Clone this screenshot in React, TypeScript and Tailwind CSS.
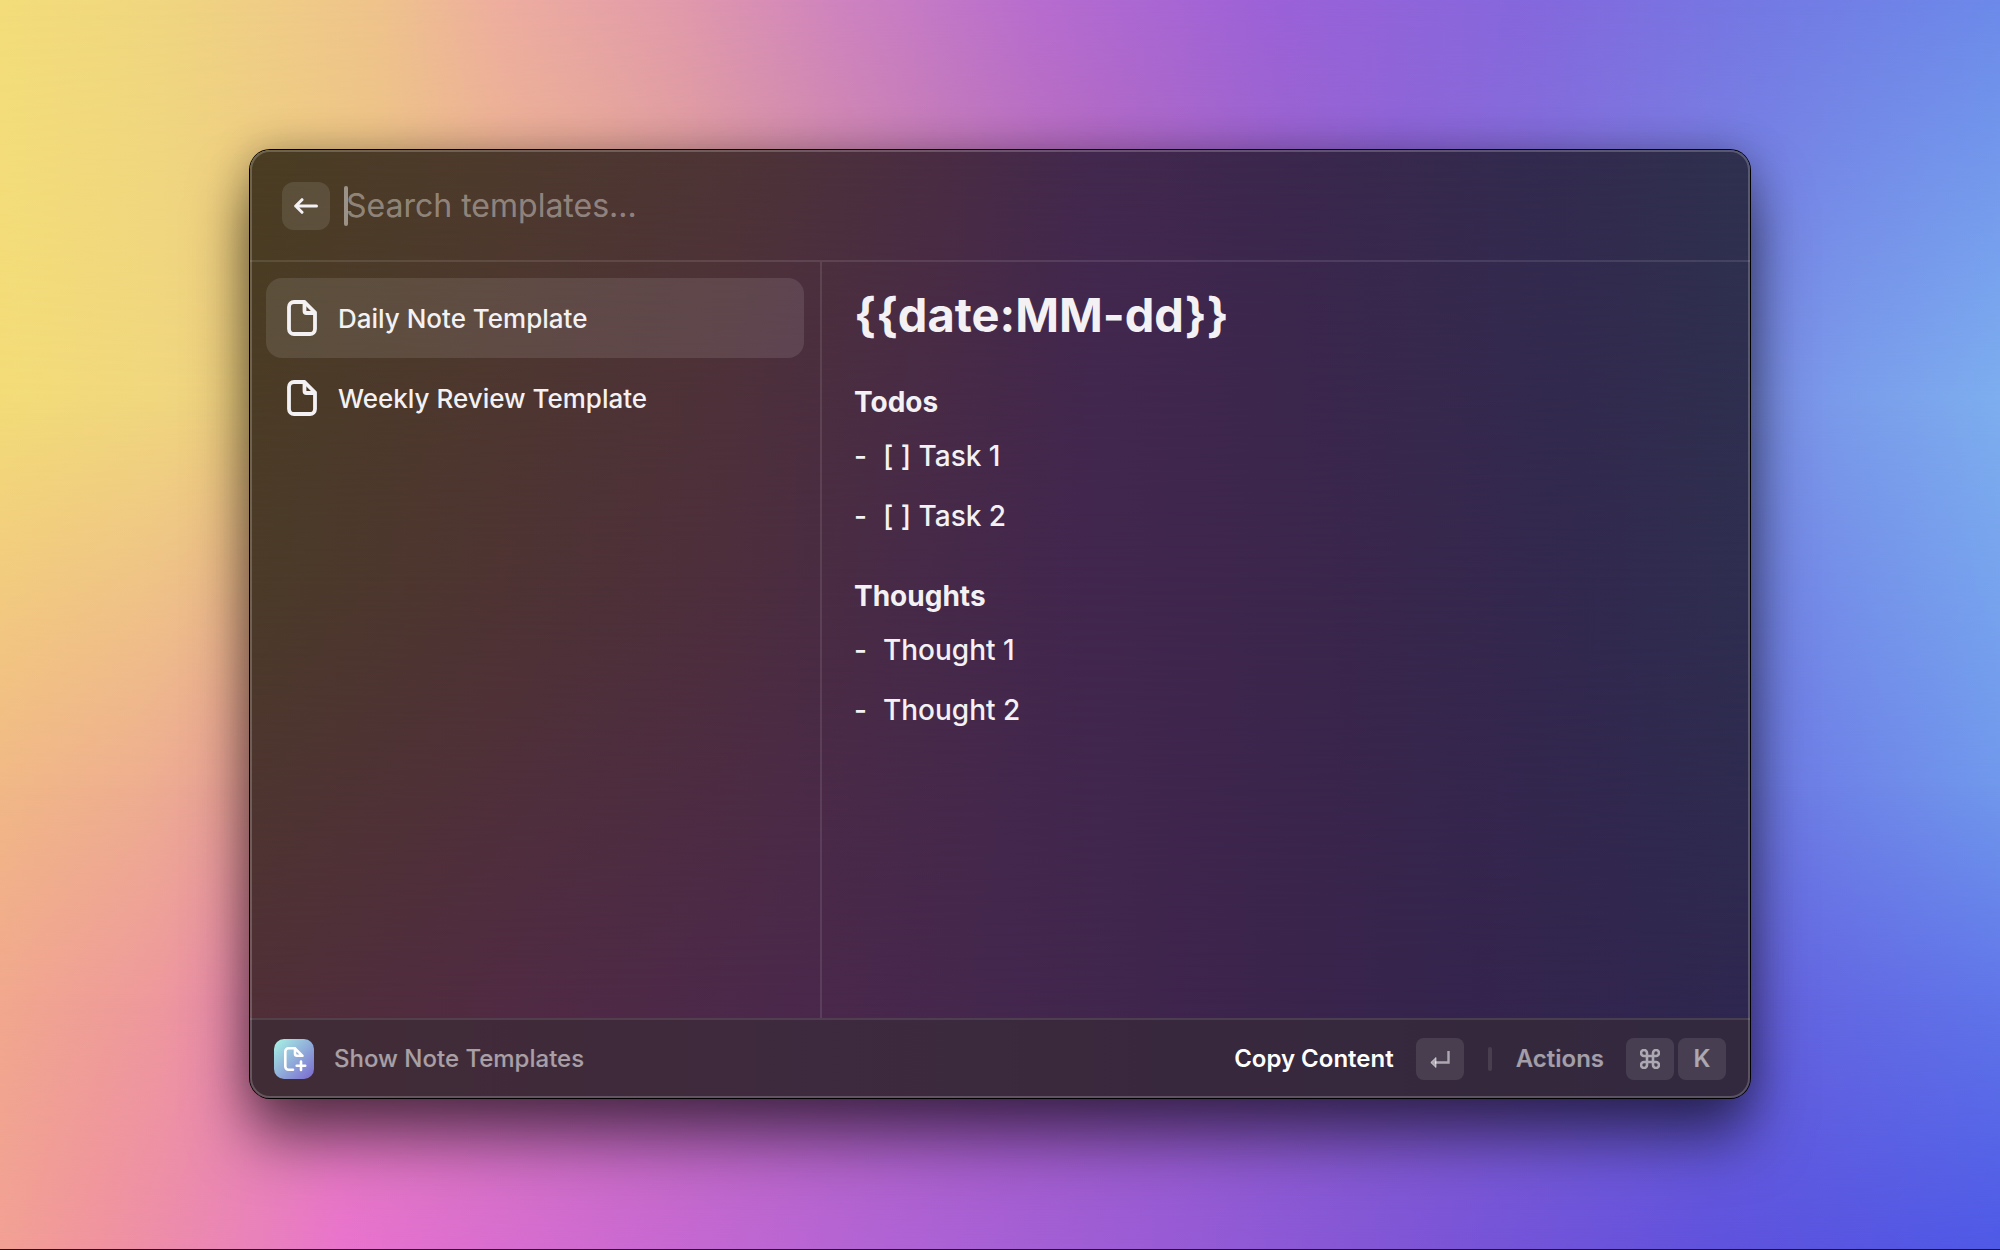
import React from "react";

function FileIcon() {
  return (
    <svg viewBox="0 0 32 36" className="h-9 w-8 shrink-0" fill="none" stroke="currentColor" strokeWidth="3.8" strokeLinejoin="round" strokeLinecap="round" aria-hidden="true">
      <path d="M18.500 2H8a5 5 0 0 0-5 5v22a5 5 0 0 0 5 5h16a5 5 0 0 0 5-5V12.500z" />
      <path d="M18.500 2.500V11a2 2 0 0 0 2 2H28" />
    </svg>
  );
}

function Backdrop() {
  return (
    <div aria-hidden="true" className="absolute inset-0 border-b border-[#2a1028]">
      <div className="absolute inset-0 bg-[linear-gradient(to_right,#f3dd7a_0%,#f0d680_8%,#efc38c_19%,#eeae9f_25%,#e19aab_34%,#cf83bf_42%,#b76ccf_52%,#9b61d8_64%,#8468dd_77%,#7479e3_88%,#6c8aea_100%)]" />
      <div className="absolute inset-0 bg-[linear-gradient(to_right,#f3dc78_0%,#f0d67e_8%,#e8b088_30%,#b56bb0_55%,#8a66d2_70%,#7a8ee6_88%,#7a9bea_92%,#7daeef_100%)] mask-[linear-gradient(to_bottom,transparent_0%,#000_32%)]" />
      <div className="absolute inset-0 bg-[linear-gradient(to_right,#f1b886_0%,#eeae90_7%,#e9a098_12%,#df7fa8_22%,#a060b8_55%,#7462d0_78%,#6e7ee6_90%,#7098ec_100%)] mask-[linear-gradient(to_bottom,transparent_32%,#000_63%)]" />
      <div className="absolute inset-0 bg-[linear-gradient(to_right,#f1a88d_0%,#ee989d_8%,#e585b0_13%,#a45cc4_50%,#6b62de_87%,#6466e1_90%,#6075e9_100%)] mask-[linear-gradient(to_bottom,transparent_63%,#000_80%)]" />
      <div className="absolute inset-0 bg-[linear-gradient(to_right,#f2a094_0%,#f0939f_5%,#e981bc_13%,#e973cd_17%,#cc69d1_31%,#b163d4_44%,#995bd5_58%,#7b54d6_72%,#5f52dd_86%,#4e59e6_100%)] mask-[linear-gradient(to_bottom,transparent_80%,#000_100%)]" />
    </div>
  );
}

function WindowTint() {
  return (
    <div aria-hidden="true" className="absolute inset-0">
      <div className="absolute inset-0 bg-[linear-gradient(to_right,#4a3d22_0%,#4d3a2c_16%,#4e3436_32%,#4a2c43_46%,#43284e_56%,#3c274d_68%,#332a4e_84%,#2f304f_100%)]" />
      <div className="absolute inset-0 bg-[linear-gradient(to_right,#4b3b28_0%,#4e3432_16%,#4d2e3d_32%,#472a48_44%,#42264e_56%,#3c264c_70%,#33284e_86%,#2e2e50_100%)] mask-[linear-gradient(to_bottom,transparent_0%,#000_45%)]" />
      <div className="absolute inset-0 bg-[linear-gradient(to_right,#502f38_0%,#502a44_18%,#4b284b_34%,#44274d_50%,#3c244c_66%,#35244d_80%,#2e274f_100%)] mask-[linear-gradient(to_bottom,transparent_45%,#000_92%)]" />
    </div>
  );
}

const templates = ["Daily Note Template", "Weekly Review Template"];
const sections = [
  { title: "Todos", items: ["[ ] Task 1", "[ ] Task 2"] },
  { title: "Thoughts", items: ["Thought 1", "Thought 2"] },
];

export default function App() {
  return (
    <main className="relative flex min-h-screen items-start justify-center px-[12.5%] py-[150px] font-['Inter',sans-serif] text-[#f3f1f3]">
      <Backdrop />
      <div className="relative w-full rounded-[20px] shadow-[0_0_0_1px_#000,0_40px_60px_rgba(0,0,0,0.55),0_0_40px_rgba(0,0,0,0.28)]">
        <section className="relative flex min-h-[948px] flex-col overflow-hidden rounded-[20px]">
          <WindowTint />
          <header className="relative flex h-28 items-center gap-4 border-b-2 border-white/10 px-8 pt-4 pb-3.5">
            <button type="button" aria-label="Back" className="flex size-12 shrink-0 items-center justify-center rounded-xl bg-white/10">
              <svg viewBox="0 0 24 16" className="h-4 w-6" fill="none" stroke="currentColor" strokeWidth="3" strokeLinecap="round" strokeLinejoin="round" aria-hidden="true">
                <path d="M22.500 8H1.700M8 1.700 1.700 8l6.300 6.300" />
              </svg>
            </button>
            <div className="relative flex grow items-center">
              <input type="text" aria-label="Search templates" placeholder="Search templates..." className="h-12 w-full bg-transparent text-[32px] outline-none placeholder:text-white/40" />
              <span aria-hidden="true" className="absolute -left-0.5 h-10 w-1 rounded-sm bg-white/45" />
            </div>
          </header>
          <div className="relative flex grow">
            <nav aria-label="Templates" className="w-[38.1333%] shrink-0 border-r-2 border-white/10 p-4">
              {templates.map((name, i) => (
                <button key={name} type="button" className={i === 0 ? "flex h-20 w-full items-center gap-5 rounded-2xl bg-white/10 px-5 text-left text-[26px] font-medium" : "flex h-20 w-full items-center gap-5 rounded-2xl px-5 text-left text-[26px] font-medium"}>
                  <FileIcon />
                  {name}
                </button>
              ))}
            </nav>
            <article className="grow px-8 pt-6">
              <h1 className="mb-10 text-[47px] leading-[58px] font-bold">{"{{date:MM-dd}}"}</h1>
              {sections.map((s) => (
                <section key={s.title} className="mb-8 text-[28px]">
                  <h2 className="leading-9 font-bold">{s.title}</h2>
                  <ul className="mt-1.5 flex flex-col font-medium">
                    {s.items.map((t) => (
                      <li key={t} className="flex h-[60px] items-center gap-4">
                        <span>-</span>
                        {t}
                      </li>
                    ))}
                  </ul>
                </section>
              ))}
            </article>
          </div>
          <footer className="relative flex h-20 items-center border-t-2 border-white/10 bg-[#352b34]/60 px-6 text-[24px] font-medium text-white/55">
            <svg viewBox="0 0 40 40" className="size-10" aria-hidden="true">
              <defs>
                <linearGradient id="badge" x1="0" y1="0" x2="1" y2="1">
                  <stop offset="0" stopColor="#a8f5e4" />
                  <stop offset="1" stopColor="#7a68d0" />
                </linearGradient>
              </defs>
              <rect width="40" height="40" rx="10" fill="url(#badge)" />
              <g fill="none" stroke="#fff" strokeWidth="2.600" strokeLinecap="round" strokeLinejoin="round">
                <path d="M19 30.700H14.500a3.200 3.200 0 0 1-3.200-3.200V12.500a3.200 3.200 0 0 1 3.200-3.200H21l7.500 7.500H23a2 2 0 0 1-2-2V9.300" />
                <path d="M27 22.500v8.500M22.700 26.800h8.500" />
              </g>
            </svg>
            <span className="ml-5 grow">Show Note Templates</span>
            <button type="button" className="flex items-center gap-[22px] font-semibold text-white">
              Copy Content
              <kbd className="flex h-[42px] w-12 items-center justify-center rounded-lg bg-white/10 text-white/55">
                <svg viewBox="0 0 20 17" className="h-[17px] w-5" fill="none" stroke="currentColor" strokeWidth="2.400" aria-hidden="true">
                  <path d="M18.500 0v11.500H5" />
                  <path d="M6 6.500v10L.8 11.500z" fill="currentColor" strokeWidth="1" strokeLinejoin="round" />
                </svg>
              </kbd>
            </button>
            <span aria-hidden="true" className="mx-6 h-6 w-1 rounded-full bg-white/10" />
            <button type="button" className="flex items-center gap-[22px] font-semibold">
              Actions
              <span className="flex gap-1">
                <kbd className="flex h-[42px] w-12 items-center justify-center rounded-lg bg-white/10">
                  <svg viewBox="2 2 20 20" className="size-5" fill="none" stroke="currentColor" strokeWidth="2.600" aria-hidden="true">
                    <path d="M15 6v12a3 3 0 1 0 3-3H6a3 3 0 1 0 3 3V6a3 3 0 1 0-3 3h12a3 3 0 1 0-3-3" />
                  </svg>
                </kbd>
                <kbd className="flex h-[42px] w-12 items-center justify-center rounded-lg bg-white/10 font-['Inter',sans-serif]">K</kbd>
              </span>
            </button>
          </footer>
          <div aria-hidden="true" className="pointer-events-none absolute inset-0 rounded-[20px] border-2 border-white/20" />
        </section>
      </div>
    </main>
  );
}
